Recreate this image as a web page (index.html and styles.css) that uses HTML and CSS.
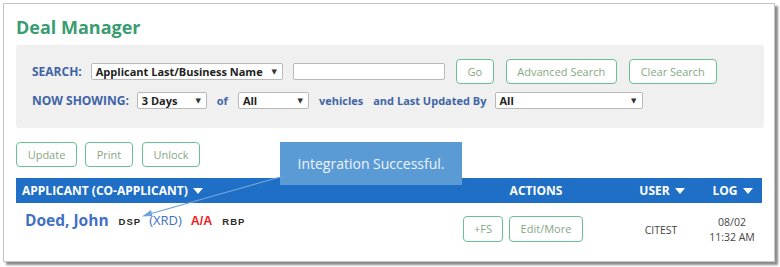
FILE: index.html
```html
<!DOCTYPE html>
<html>
<head>
<meta charset="utf-8">
<link rel="stylesheet" href="styles.css">
</head>
<body>
<div class="frame">
  <h1 class="title">Deal Manager</h1>
  <div class="panel">
    <div class="prow">
      <span class="lbl lbl-caps">SEARCH:</span>
      <span class="sel sel-search"><span>Applicant Last/Business Name</span><i>&#9660;</i></span>
      <span class="txt"></span>
      <span class="btn btn-go">Go</span>
      <span class="btn btn-adv">Advanced Search</span>
      <span class="btn btn-clear">Clear Search</span>
    </div>
    <div class="prow prow2">
      <span class="lbl lbl-caps">NOW SHOWING:</span>
      <span class="sel sel-days"><span>3 Days</span><i>&#9660;</i></span>
      <span class="lbl lbl-of">of</span>
      <span class="sel sel-all"><span>All</span><i>&#9660;</i></span>
      <span class="lbl lbl-veh">vehicles</span>
      <span class="lbl lbl-by">and Last Updated By</span>
      <span class="sel sel-user"><span>All</span><i>&#9660;</i></span>
    </div>
  </div>
  <div class="actions-row">
    <span class="btn btn-upd">Update</span>
    <span class="btn btn-print">Print</span>
    <span class="btn btn-unlock">Unlock</span>
  </div>
  <div class="grid head">
    <div class="c-app">APPLICANT (CO-APPLICANT)<i class="caret"></i></div>
    <div class="c-act">ACTIONS</div>
    <div class="c-user">USER<i class="caret"></i></div>
    <div class="c-log">LOG<i class="caret"></i></div>
  </div>
  <div class="grid row">
    <div class="c-app app-cell">
      <span class="name">Doed, John</span>
      <span class="tag">DSP</span>
      <span class="xrd">(XRD)</span>
      <span class="aa">A/A</span>
      <span class="tag tag-rbp">RBP</span>
    </div>
    <div class="c-act act-cell">
      <span class="btn btn-fs">+FS</span>
      <span class="btn btn-edit">Edit/More</span>
    </div>
    <div class="c-user user-cell">CITEST</div>
    <div class="c-log log-cell">08/02<br>11:32 AM</div>
  </div>
  <div class="toast">Integration Successful.</div>
  <svg class="arrow" width="150" height="50" viewBox="0 0 150 50">
    <line x1="146" y1="4" x2="8" y2="43" stroke="#6fa3dc" stroke-width="1.2"/>
    <polygon points="4,44.5 13,38 14.5,44" fill="#6fa3dc"/>
  </svg>
</div>
</body>
</html>
```

FILE: styles.css
```css
html, body { margin: 0; padding: 0; background: #fff; }
body { font-family: "Open Sans", "DejaVu Sans", sans-serif; width: 780px; height: 267px; overflow: hidden; }

.frame {
  position: relative;
  margin: 3px 0 0 3px;
  width: 770px;
  height: 257px;
  border: 1px solid #c4c4c4;
  box-shadow: 3px 3px 2px #8c8c8c;
  background: #fff;
  box-sizing: content-box;
  padding: 0;
}

.title {
  margin: 0;
  padding: 10px 0 0 12px;
  height: 31px;
  font-size: 18px;
  line-height: 26px;
  font-weight: 700;
  color: #3a9c72;
}

.panel {
  margin: 0 10px 0 12px;
  height: 83px;
  background: #f0f0f0;
  border-radius: 3px;
  padding: 14px 0 0 16px;
  box-sizing: border-box;
}

.prow { display: flex; align-items: center; height: 25px; }
.prow2 { margin-top: 7px; height: 19px; }

.lbl { color: #3e64a6; font-weight: 700; font-size: 11px; white-space: nowrap; }
.lbl-caps { font-size: 12px; }

.sel {
  display: flex; align-items: center; justify-content: space-between;
  height: 17px; box-sizing: border-box;
  border: 1px solid #b9b9b9; border-radius: 2px; background: #fff;
  font-size: 11px; font-weight: 700; color: #222;
  padding: 0 5px 0 4px;
}
.sel i { font-style: normal; font-size: 7px; color: #333; }

.sel-search { width: 192px; margin-left: 9px; }
.txt { width: 152px; height: 17px; box-sizing: border-box; border: 1px solid #b9b9b9; border-radius: 2px; background: #fff; margin-left: 10px; }

.btn {
  display: inline-flex; align-items: center; justify-content: center;
  box-sizing: border-box; height: 25px;
  border: 1.5px solid #67c193; border-radius: 4px; background: #fff;
  color: #86a884; font-size: 11px; white-space: nowrap;
}
.btn-go { width: 38px; margin-left: 11px; }
.btn-adv { width: 111px; margin-left: 12px; }
.btn-clear { width: 88px; margin-left: 12px; }

.sel-days { width: 70px; margin-left: 8px; }
.lbl-of { margin-left: 10px; }
.sel-all { width: 71px; margin-left: 10px; }
.lbl-veh { margin-left: 10px; }
.lbl-by { margin-left: 10px; }
.sel-user { width: 148px; margin-left: 8px; }

.actions-row { display: flex; margin: 14px 0 0 12px; height: 25px; }
.btn-upd { width: 61px; }
.btn-print { width: 48px; margin-left: 8px; }
.btn-unlock { width: 58px; margin-left: 9px; }

.grid { display: grid; grid-template-columns: 439px 165px 82px 60px; margin-left: 12px; width: 746px; }
.head {
  margin-top: 11px; height: 25px; background: #1f6fc6;
  color: #fff; font-weight: 700; font-size: 12px; align-items: center;
}
.head > div { display: flex; align-items: center; }
.caret {
  display: inline-block; width: 0; height: 0; margin-left: 5px; margin-top: 1px;
  border-left: 5px solid transparent; border-right: 5px solid transparent; border-top: 6px solid #fff;
}
.head .c-app { padding-left: 6px; }
.head .c-act { justify-content: center; padding-right: 3px; }
.head .c-user { justify-content: center; padding-left: 2px; }
.head .c-log { justify-content: center; padding-left: 1px; }

.row { height: 47px; align-items: center; }
.app-cell { display: flex; align-items: center; padding-left: 9px; margin-top: -13px; }
.name { color: #3f70c4; font-weight: 700; font-size: 15.5px; }
.tag { font-family: "Liberation Sans", Arial, sans-serif; font-weight: 700; font-size: 9.5px; letter-spacing: 1px; color: #2a2a2a; margin-left: 10px; margin-top: 2px; }
.xrd { color: #3f70c4; font-size: 13px; margin-left: 8px; }
.aa { font-family: "Liberation Sans", Arial, sans-serif; font-weight: 700; font-size: 12.5px; color: #ee1c1c; margin-left: 9px; margin-top: 1px; }
.tag-rbp { margin-left: 10px; }

.act-cell { display: flex; gap: 6px; padding-left: 8px; margin-top: 4px; }
.btn-fs { width: 40px; height: 26px; }
.btn-edit { width: 74px; height: 26px; }
.user-cell { text-align: center; font-size: 10.5px; color: #444; margin-top: 7px; }
.log-cell { text-align: center; font-size: 10.5px; color: #444; line-height: 15px; margin-top: 7px; }

.toast {
  position: absolute; left: 276px; top: 138px; width: 182px; height: 43px;
  background: #5b9bd5; color: #eef4fb; font-size: 14px;
  display: flex; align-items: center; justify-content: center;
}
.arrow { position: absolute; left: 134px; top: 168px; }
```
